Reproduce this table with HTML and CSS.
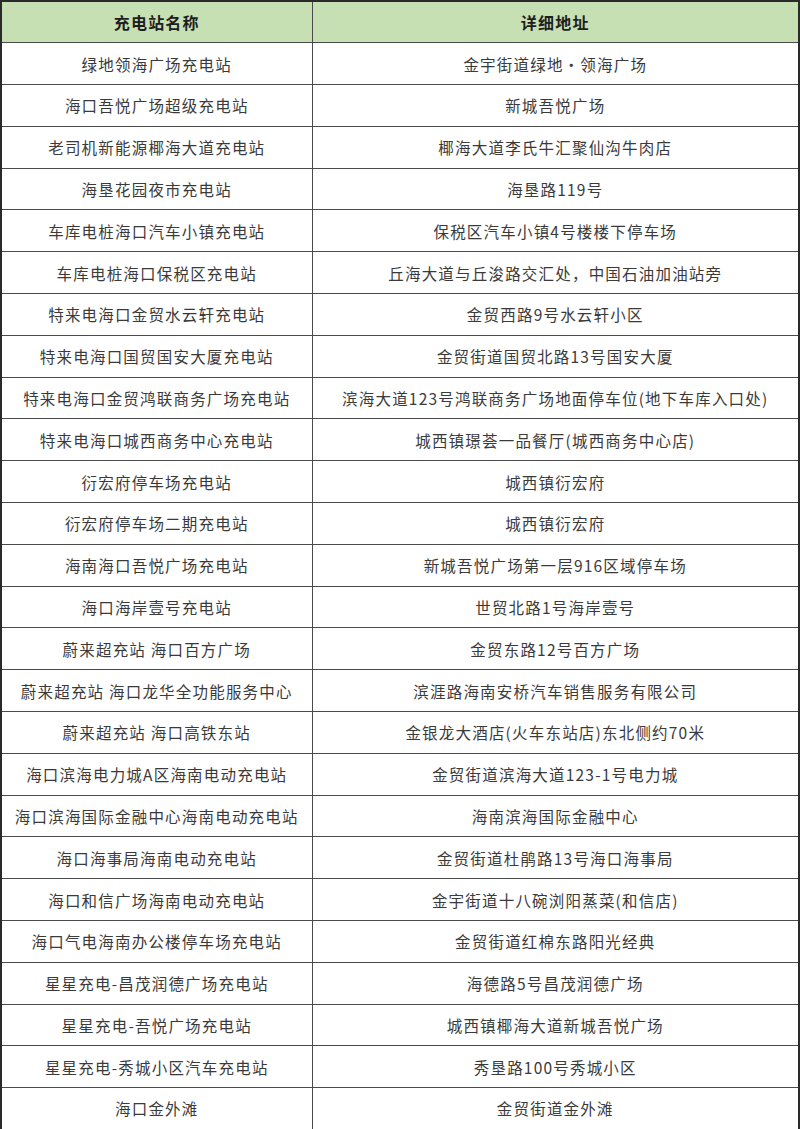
FILE: index.html
```html
<!DOCTYPE html>
<html lang="zh-CN">
<head>
<meta charset="utf-8">
<title>充电站列表</title>
<link rel="stylesheet" href="styles.css">
</head>
<body>
<table class="stations">
  <colgroup><col class="col-name"><col class="col-addr"></colgroup>
  <thead>
    <tr><th>充电站名称</th><th>详细地址</th></tr>
  </thead>
  <tbody>
    <tr><td>绿地领海广场充电站</td><td>金宇街道绿地・领海广场</td></tr>
    <tr><td>海口吾悦广场超级充电站</td><td>新城吾悦广场</td></tr>
    <tr><td>老司机新能源椰海大道充电站</td><td>椰海大道李氏牛汇聚仙沟牛肉店</td></tr>
    <tr><td>海垦花园夜市充电站</td><td>海垦路119号</td></tr>
    <tr><td>车库电桩海口汽车小镇充电站</td><td>保税区汽车小镇4号楼楼下停车场</td></tr>
    <tr><td>车库电桩海口保税区充电站</td><td>丘海大道与丘浚路交汇处，中国石油加油站旁</td></tr>
    <tr><td>特来电海口金贸水云轩充电站</td><td>金贸西路9号水云轩小区</td></tr>
    <tr><td>特来电海口国贸国安大厦充电站</td><td>金贸街道国贸北路13号国安大厦</td></tr>
    <tr><td>特来电海口金贸鸿联商务广场充电站</td><td>滨海大道123号鸿联商务广场地面停车位(地下车库入口处)</td></tr>
    <tr><td>特来电海口城西商务中心充电站</td><td>城西镇璟荟一品餐厅(城西商务中心店)</td></tr>
    <tr><td>衍宏府停车场充电站</td><td>城西镇衍宏府</td></tr>
    <tr><td>衍宏府停车场二期充电站</td><td>城西镇衍宏府</td></tr>
    <tr><td>海南海口吾悦广场充电站</td><td>新城吾悦广场第一层916区域停车场</td></tr>
    <tr><td>海口海岸壹号充电站</td><td>世贸北路1号海岸壹号</td></tr>
    <tr><td>蔚来超充站 海口百方广场</td><td>金贸东路12号百方广场</td></tr>
    <tr><td>蔚来超充站 海口龙华全功能服务中心</td><td>滨涯路海南安桥汽车销售服务有限公司</td></tr>
    <tr><td>蔚来超充站 海口高铁东站</td><td>金银龙大酒店(火车东站店)东北侧约70米</td></tr>
    <tr><td>海口滨海电力城A区海南电动充电站</td><td>金贸街道滨海大道123-1号电力城</td></tr>
    <tr><td>海口滨海国际金融中心海南电动充电站</td><td>海南滨海国际金融中心</td></tr>
    <tr><td>海口海事局海南电动充电站</td><td>金贸街道杜鹃路13号海口海事局</td></tr>
    <tr><td>海口和信广场海南电动充电站</td><td>金宇街道十八碗浏阳蒸菜(和信店)</td></tr>
    <tr><td>海口气电海南办公楼停车场充电站</td><td>金贸街道红棉东路阳光经典</td></tr>
    <tr><td>星星充电-昌茂润德广场充电站</td><td>海德路5号昌茂润德广场</td></tr>
    <tr><td>星星充电-吾悦广场充电站</td><td>城西镇椰海大道新城吾悦广场</td></tr>
    <tr><td>星星充电-秀城小区汽车充电站</td><td>秀垦路100号秀城小区</td></tr>
    <tr><td>海口金外滩</td><td>金贸街道金外滩</td></tr>
  </tbody>
</table>
</body>
</html>
```

FILE: styles.css
```css
html, body {
  margin: 0;
  padding: 0;
  background: #ffffff;
}

.stations {
  width: 800px;
  table-layout: fixed;
  border-collapse: collapse;
  font-family: "Noto Sans CJK SC", "Liberation Serif", serif;
  font-size: 15.5px;
  color: #3a3a3a;
  border: 2px solid #2a2a2a;
}

.col-name { width: 311px; }

.stations tr {
  height: 41.8px;
}

.stations th,
.stations td {
  border: 1px solid #4a4a4a;
  text-align: center;
  vertical-align: middle;
  padding: 0 1px;
  letter-spacing: 1.2px;
  white-space: nowrap;
  line-height: 20px;
}

.stations th {
  background: #c6e0b4;
  color: #1e1e1e;
  font-weight: 700;
  font-size: 16px;
  letter-spacing: 1.2px;
}
```
